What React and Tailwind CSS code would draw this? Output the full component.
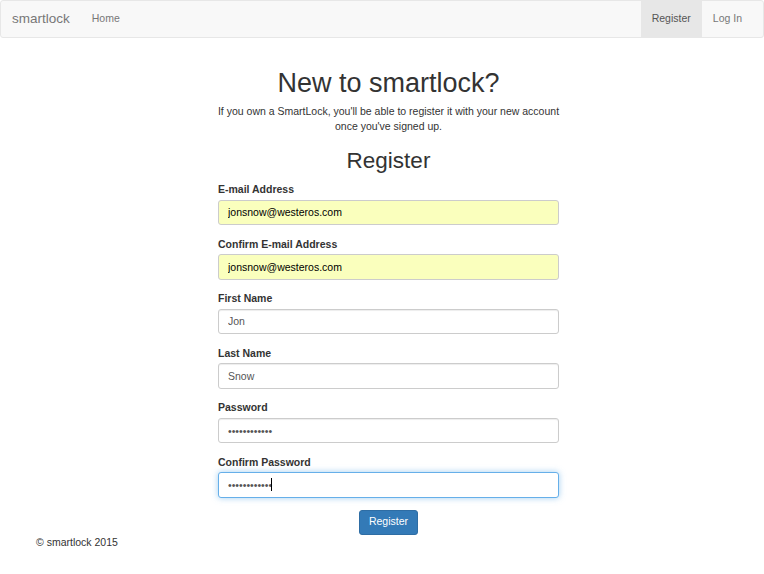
import React from 'react';

const fields = [
  { label: 'E-mail Address', type: 'email', value: 'jonsnow@westeros.com', autofill: true },
  { label: 'Confirm E-mail Address', type: 'email', value: 'jonsnow@westeros.com', autofill: true },
  { label: 'First Name', type: 'text', value: 'Jon' },
  { label: 'Last Name', type: 'text', value: 'Snow' },
  { label: 'Password', type: 'password', value: 'winteriscomi' },
  { label: 'Confirm Password', type: 'password', value: 'winteriscomi', focused: true },
];

function Field({ label, type, value, autofill, focused }) {
  const base =
    'block w-full h-[25.5px] px-[9px] rounded-[3px] border text-[10.5px] outline-none caret-transparent';
  const tone = autofill
    ? 'bg-[#faffbd] border-[#ccc] text-black'
    : focused
      ? 'bg-white border-[#66afe9] text-[#555] shadow-[0_0_6px_rgba(102,175,233,0.6)]'
      : 'bg-white border-[#ccc] text-[#555] shadow-[inset_0_1px_1px_rgba(0,0,0,0.075)]';

  return (
    <div className="mb-[11.6px]">
      <label className="block mb-[2.5px] font-bold text-[10.5px] leading-[15px] text-[#333]">
        {label}
      </label>
      <div className="relative">
        <input type={type} defaultValue={value} readOnly className={`${base} ${tone}`} />
        {focused && <span className="absolute left-[53px] top-[6px] h-[13px] w-px bg-black" />}
      </div>
    </div>
  );
}

export default function App() {
  return (
    <div className="min-h-[574px] bg-white text-[#333] font-['Liberation_Sans',Arial,sans-serif]">
      <nav className="h-[38px] flex items-stretch justify-between border border-[#e7e7e7] rounded-[3px] bg-[#f8f8f8]">
        <div className="flex items-stretch">
          <a className="flex items-center px-[11px] text-[13.5px] text-[#777]">smartlock</a>
          <a className="flex items-center px-[11px] text-[10.5px] text-[#777]">Home</a>
        </div>
        <div className="flex items-stretch pr-[10px]">
          <a className="flex items-center px-[11px] text-[10.5px] text-[#555] bg-[#e7e7e7]">Register</a>
          <a className="flex items-center px-[11px] text-[10.5px] text-[#777]">Log In</a>
        </div>
      </nav>

      <main className="ml-[218px] w-[341px]">
        <h1 className="mt-[30px] text-center text-[27px] leading-[30px] font-normal">New to smartlock?</h1>
        <p className="mt-[6px] -mx-[6px] text-center text-[10.5px] leading-[15px]">
          If you own a SmartLock, you'll be able to register it with your new account once you've signed up.
        </p>
        <h2 className="mt-[14px] text-center text-[22.5px] leading-[25px] font-normal">Register</h2>

        <form className="mt-[9px]">
          {fields.map((f) => (
            <Field key={f.label} {...f} />
          ))}
          <div className="flex justify-center">
            <button
              type="button"
              className="h-[25.5px] px-[9px] rounded-[3px] border border-[#2e6da4] bg-[#337ab7] text-white text-[10.5px]"
            >
              Register
            </button>
          </div>
        </form>
      </main>

      <footer className="pl-[36px] text-[10.5px] leading-[15px]">© smartlock 2015</footer>
    </div>
  );
}
